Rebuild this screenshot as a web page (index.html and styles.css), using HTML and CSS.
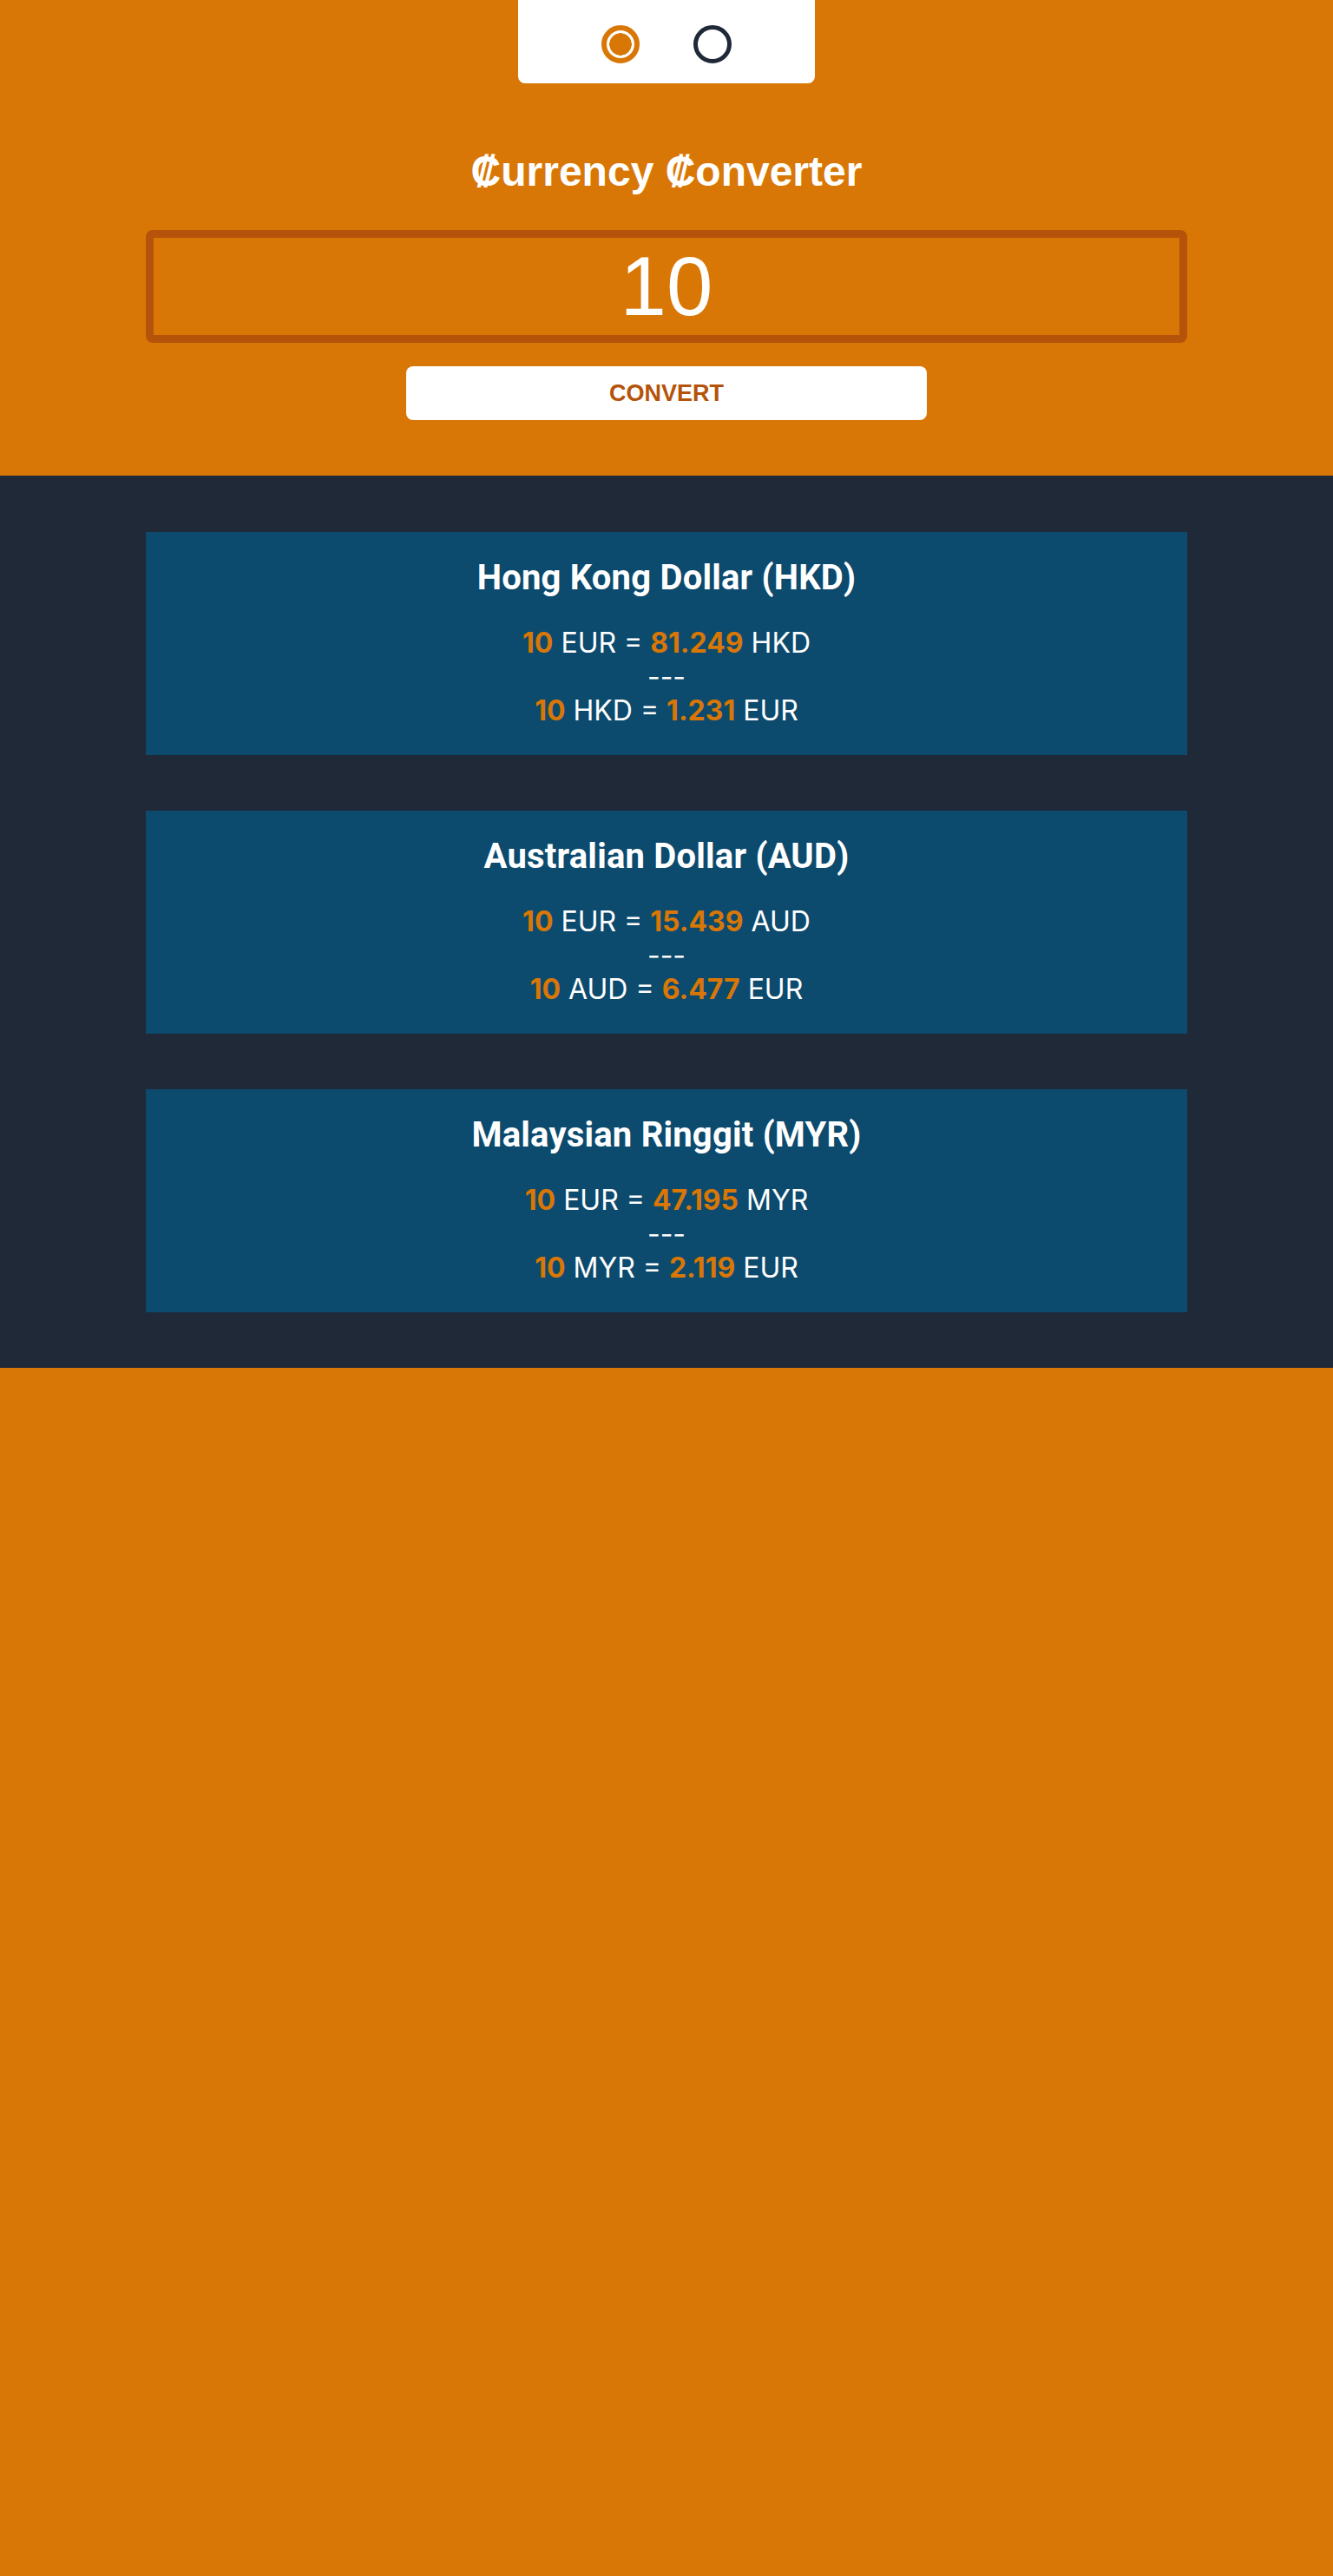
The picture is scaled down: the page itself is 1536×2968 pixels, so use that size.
FILE: index.html
```html
<!DOCTYPE html>
<html lang="en">
<head>
<meta charset="utf-8">
<title>Currency Converter</title>
<link rel="stylesheet" href="styles.css">
</head>
<body>
<header class="hero">
  <nav class="switcher">
    <span class="radio radio-on"></span>
    <span class="radio radio-off"></span>
  </nav>
  <h1 class="title">₡urrency ₡onverter</h1>
  <input class="amount" type="text" value="10">
  <button class="convert" type="button">CONVERT</button>
</header>
<main class="results">
  <section class="card">
    <h2 class="card-title">Hong Kong Dollar (HKD)</h2>
    <p class="rate"><b>10</b> EUR = <b>81.249</b> HKD<br>---<br><b>10</b> HKD = <b>1.231</b> EUR</p>
  </section>
  <section class="card">
    <h2 class="card-title">Australian Dollar (AUD)</h2>
    <p class="rate"><b>10</b> EUR = <b>15.439</b> AUD<br>---<br><b>10</b> AUD = <b>6.477</b> EUR</p>
  </section>
  <section class="card">
    <h2 class="card-title">Malaysian Ringgit (MYR)</h2>
    <p class="rate"><b>10</b> EUR = <b>47.195</b> MYR<br>---<br><b>10</b> MYR = <b>2.119</b> EUR</p>
  </section>
</main>
</body>
</html>
```
FILE: styles.css
```css
* { box-sizing: border-box; }
html, body { margin: 0; padding: 0; }
body {
  background: #d97706;
  min-height: 2968px;
  font-family: "Liberation Sans", Arial, sans-serif;
  color: #ffffff;
}
.hero {
  display: flex;
  flex-direction: column;
  align-items: center;
  padding-bottom: 64px;
}
.switcher {
  width: 342px;
  height: 96px;
  background: #ffffff;
  border-radius: 0 0 8px 8px;
  display: flex;
  justify-content: center;
  align-items: center;
  gap: 62px;
  padding-top: 6px;
}
.radio {
  width: 44px;
  height: 44px;
  border-radius: 50%;
  display: block;
}
.radio-on {
  border: 6px solid #d97706;
  background: radial-gradient(circle, #d97706 0 12.5px, #ffffff 13px);
}
.radio-off {
  border: 5px solid #1f2937;
  background: #ffffff;
}
.title {
  margin: 78px 0 0;
  font-size: 48px;
  line-height: 48px;
  font-weight: 700;
  font-family: "Liberation Sans", "DejaVu Sans", sans-serif;
}
.amount {
  margin-top: 43px;
  width: 1200px;
  height: 130px;
  border: 9px solid #b45309;
  border-radius: 8px;
  background: transparent;
  color: #ffffff;
  font-family: "Liberation Sans", Arial, sans-serif;
  font-size: 96px;
  text-align: center;
  padding: 0;
  outline: none;
}
.convert {
  margin-top: 27px;
  width: 600px;
  height: 62px;
  border: none;
  border-radius: 8px;
  background: #ffffff;
  color: #b45309;
  font-family: "Liberation Sans", Arial, sans-serif;
  font-weight: 700;
  font-size: 27px;
  padding: 0;
}
.results {
  background: #1f2937;
  padding: 65px 0 64px;
  display: flex;
  flex-direction: column;
  align-items: center;
  gap: 64px;
}
.card {
  width: 1200px;
  background: #0c4a6e;
  text-align: center;
  padding: 29px 0 32px;
}
.card-title {
  margin: 0 0 31px;
  font-family: Roboto, "Liberation Sans", sans-serif;
  font-weight: 700;
  font-size: 40px;
  line-height: 48px;
  letter-spacing: 0.2px;
}
.rate {
  margin: 0;
  font-family: Inter, "Noto Sans", sans-serif;
  font-size: 32px;
  line-height: 39px;
}
.rate b {
  color: #d97706;
  font-weight: 700;
}
```
